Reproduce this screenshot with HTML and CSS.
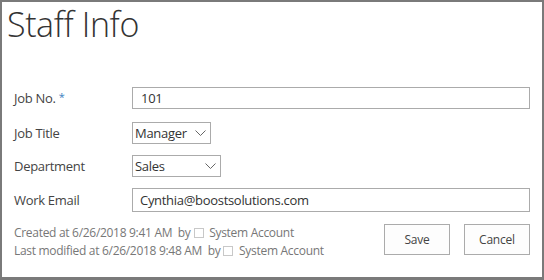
FILE: index.html
```html
<!DOCTYPE html>
<html lang="en">
<head>
    <meta charset="UTF-8">
    <title>Staff Info</title>
    <link rel="stylesheet" href="styles.css">
</head>
<body>
    <div class="panel">
        <h1 class="title">Staff Info</h1>
        <div class="form">
            <div class="row first">
                <label>Job No. <span class="req">*</span></label>
                <input type="text" class="field" value="101">
            </div>
            <div class="row">
                <label>Job Title</label>
                <div class="select job-title">
                    <span>Manager</span>
                    <svg width="11" height="7" viewBox="0 0 11 7"><path d="M0.5 0.5 L5.5 5.5 L10.5 0.5" fill="none" stroke="#666" stroke-width="1"/></svg>
                </div>
            </div>
            <div class="row">
                <label>Department</label>
                <div class="select dept">
                    <span>Sales</span>
                    <svg width="11" height="7" viewBox="0 0 11 7"><path d="M0.5 0.5 L5.5 5.5 L10.5 0.5" fill="none" stroke="#666" stroke-width="1"/></svg>
                </div>
            </div>
            <div class="row email-row">
                <label>Work Email</label>
                <input type="text" class="field" value="Cynthia@boostsolutions.com">
            </div>
        </div>
        <div class="footer">
            <div class="meta">
                <div>Created at 6/26/2018 9:41 AM&nbsp; by<span class="box"></span>&nbsp; System Account</div>
                <div>Last modified at 6/26/2018 9:48 AM&nbsp; by<span class="box"></span>&nbsp; System Account</div>
            </div>
            <div class="buttons">
                <button>Save</button>
                <button>Cancel</button>
            </div>
        </div>
    </div>
</body>
</html>
```

FILE: styles.css
```css
body {
    margin: 0;
    font-family: "Open Sans", "Noto Sans", sans-serif;
    color: #444;
    background: #fff;
    letter-spacing: -0.3px;
}
.panel {
    width: 544px;
    height: 280px;
    box-sizing: border-box;
    border: 2px solid #7a7a7a;
    border-bottom-width: 3px;
    padding: 0 12px;
}
.title {
    margin: 0 0 0 -7px;
    font-size: 34px;
    font-weight: 300;
    line-height: 44px;
    color: #333;
    letter-spacing: -0.4px;
}
.form {
    margin-top: 41px;
}
.row {
    display: flex;
    align-items: center;
    height: 22px;
    margin-bottom: 11px;
}
.row.first {
    margin-bottom: 13px;
}
.row.email-row {
    height: 24px;
    margin-bottom: 12px;
}
.row label {
    width: 118px;
    font-size: 13px;
    color: #444;
}
.req {
    color: #3c7fc0;
    font-size: 11px;
    vertical-align: 2px;
}
.field {
    flex: 1;
    height: 100%;
    box-sizing: border-box;
    border: 1px solid #ababab;
    padding: 0 8px;
    font-family: inherit;
    font-size: 13px;
    letter-spacing: -0.3px;
    color: #333;
    outline: none;
}
.email-row .field {
    padding: 0 7px;
}
.select {
    height: 22px;
    box-sizing: border-box;
    border: 1px solid #ababab;
    display: flex;
    align-items: center;
    justify-content: space-between;
    padding: 0 4px 0 2px;
    font-size: 13px;
    color: #333;
}
.job-title {
    width: 79px;
}
.dept {
    width: 89px;
}
.footer {
    display: flex;
    justify-content: space-between;
    align-items: flex-start;
}
.meta {
    font-size: 12px;
    color: #777;
    line-height: 18px;
}
.box {
    display: inline-block;
    width: 8px;
    height: 8px;
    border: 1px solid #c8c8c8;
    margin-left: 3px;
    vertical-align: -1px;
}
.buttons {
    display: flex;
    gap: 14px;
}
.buttons button {
    width: 66px;
    height: 31px;
    background: #fdfdfd;
    border: 1px solid #ababab;
    font-family: inherit;
    font-size: 12px;
    letter-spacing: -0.2px;
    color: #444;
    padding: 0;
}
```
